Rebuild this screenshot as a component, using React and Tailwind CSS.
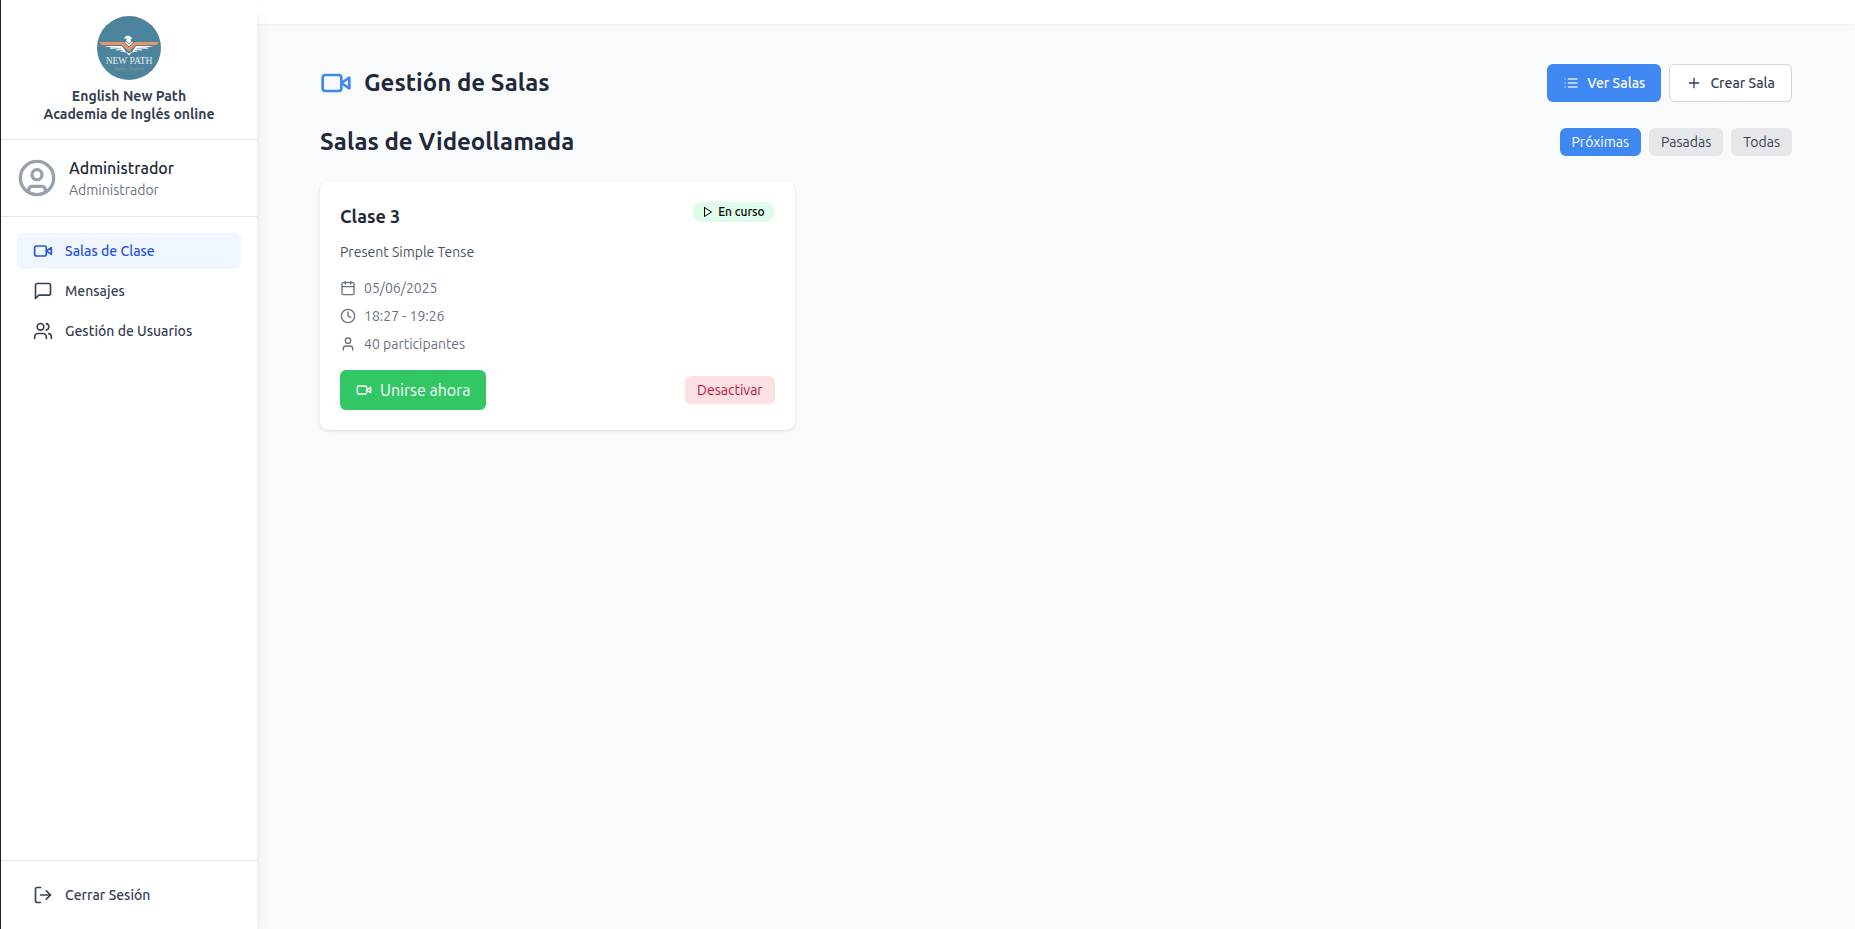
import React, { useState } from 'react'
import { FiCalendar, FiClock, FiList, FiLogOut, FiMessageSquare, FiPlay, FiPlus } from 'react-icons/fi'
import { CircleUser, User, Users } from 'lucide-react'

// camera with the triangle lens
function VideoIcon({ className }) {
    return (
        <svg viewBox="0 0 24 24" fill="none" stroke="currentColor" strokeWidth="2" strokeLinecap="round" strokeLinejoin="round" className={className}>
            <path d="m22 8-6 4 6 4V8Z" />
            <rect width="14" height="12" x="2" y="6" rx="2" ry="2" />
        </svg>
    )
}

const menuItems = [
    { name: 'Salas de Clase', icon: VideoIcon },
    { name: 'Mensajes', icon: FiMessageSquare },
    { name: 'Gestión de Usuarios', icon: Users },
];

const filtros = ['Próximas', 'Pasadas', 'Todas'];

const salas = [
    {
        id: 3,
        nombre: 'Clase 3',
        descripcion: 'Present Simple Tense',
        fecha: '05/06/2025',
        horario: '18:27 - 19:26',
        participantes: 40
    }
];

function Logo() {
    return (
        <svg viewBox="0 0 64 64" className="w-16 h-16" role="img" aria-label="New Path">
            <circle cx="32" cy="32" r="32" fill="#4d849d" />
            {/* wings */}
            <path d="M7 30h18l4.500 6.500-6-1 1-1-6 0 1-1.500-7 0 1.500-1.500z" fill="#f4f7f8" />
            <path d="M57 30H39l-4.500 6.500 6-1-1-1 6 0-1-1.500 7 0-1.500-1.500z" fill="#f4f7f8" />
            <path d="M13 31.800l11 1M17 33.800l9 .8" stroke="#4d849d" strokeWidth="0.500" />
            <path d="M51 31.800l-11 1M47 33.800l-9 .8" stroke="#4d849d" strokeWidth="0.500" />
            <path d="M2 26h24.500l5.500 5.500L37.500 26H62l-2.500 3H39l-7 6.500L25 29H4.500z" fill="#ee935c" />
            {/* head and chest */}
            <path d="M27 22.500c1-2 3-3 5-2.500 2 .3 3 1.700 3 3.500l-1.500-1 .5 3-2 2-3-3 1-2z" fill="#fff" />
            <path d="M28.500 26l3.500 3.500 3.500-3.500" fill="none" stroke="#fff" strokeWidth="1.200" />
            <path d="M28.500 35.500l3.500 4 3.500-4-3.500 2z" fill="#fff" />
            <text x="32" y="48" textAnchor="middle" fill="#e6eef1" fontSize="9.500" fontFamily="Liberation Serif, serif">NEW PATH</text>
            <text x="32" y="54" textAnchor="middle" fill="#a39283" fontSize="5" fontFamily="Liberation Serif, serif">Online English</text>
        </svg>
    )
}

function Sidebar() {
    const [active, setActive] = useState('Salas de Clase');

    return (
        <aside className="relative z-10 flex flex-col w-64 shrink-0 bg-white shadow-lg">
            <div className="flex flex-col items-center p-4 border-b border-gray-200">
                <Logo />
                <p className="mt-2 text-sm leading-tight font-semibold text-center text-gray-700">
                    English New Path<br />Academia de Inglés online
                </p>
            </div>

            <div className="flex items-center p-4 border-b border-gray-200">
                <CircleUser className="w-10 h-10 text-gray-400" />
                <div className="ml-3">
                    <p className="font-medium leading-6 text-gray-800">Administrador</p>
                    <p className="text-sm text-gray-500">Administrador</p>
                </div>
            </div>

            <nav className="flex flex-col flex-1 gap-1 p-4">
                {menuItems.map((item) => (
                    <a
                        key={item.name}
                        href="#"
                        onClick={() => setActive(item.name)}
                        className={`flex items-center px-4 py-2 rounded-md text-sm font-medium ${active === item.name ? 'bg-[#eff6ff] text-[#2c55d6]' : 'text-gray-700'}`}
                    >
                        <item.icon className="w-5 h-5 mr-3" />
                        {item.name}
                    </a>
                ))}
            </nav>

            <div className="p-4 border-t border-gray-200">
                <button className="flex items-center w-full px-4 py-2 text-sm font-medium text-gray-700 rounded-md">
                    <FiLogOut className="w-5 h-5 mr-3" />
                    Cerrar Sesión
                </button>
            </div>
        </aside>
    )
}

function SalaCard({ sala }) {
    return (
        <article className="p-5 bg-white rounded-lg shadow">
            <div className="flex items-start justify-between mb-3">
                <h3 className="text-lg font-semibold text-gray-800">{sala.nombre}</h3>
                <span className="flex items-center gap-1 px-2.5 py-0.5 text-xs font-medium text-black rounded-full bg-[#defce9]">
                    <FiPlay className="w-3 h-3" />
                    En curso
                </span>
            </div>
            <p className="mb-4 text-sm text-gray-600">{sala.descripcion}</p>

            <div className="flex flex-col gap-2 mb-4 text-sm text-gray-500">
                <div className="flex items-center gap-2">
                    <FiCalendar className="w-4 h-4" />
                    {sala.fecha}
                </div>
                <div className="flex items-center gap-2">
                    <FiClock className="w-4 h-4" />
                    {sala.horario}
                </div>
                <div className="flex items-center gap-2">
                    <User className="w-4 h-4" />
                    {sala.participantes} participantes
                </div>
            </div>

            <div className="flex items-center justify-between">
                <button className="flex items-center gap-2 px-4 py-2 text-white rounded-md bg-[#33c664]">
                    <VideoIcon className="w-4 h-4" />
                    Unirse ahora
                </button>
                <button className="px-3 py-1 text-sm rounded-md bg-[#fde0e1] text-[#be123c]">Desactivar</button>
            </div>
        </article>
    )
}

export default function App() {
    const [filtro, setFiltro] = useState('Próximas');

    return (
        <div className="flex min-h-screen border-l border-[#1f2430] bg-[#f9fafc] font-['Ubuntu','Roboto',sans-serif]">
            <Sidebar />

            <div className="flex flex-col flex-1">
                <header className="h-6 bg-white shadow-xs"></header>

                <main className="px-[63px] py-10">
                    <div className="flex items-center justify-between mb-6">
                        <h1 className="flex items-center gap-3 text-2xl font-bold text-gray-800">
                            <VideoIcon className="w-8 h-8 text-[#3f87f1]" />
                            Gestión de Salas
                        </h1>
                        <div className="flex gap-2">
                            <button className="flex items-center gap-2 px-4 py-2 text-sm font-medium text-white rounded-md bg-[#3f87f1]">
                                <FiList className="w-4 h-4 text-blue-100" />
                                Ver Salas
                            </button>
                            <button className="flex items-center gap-2 px-4 py-2 text-sm font-medium text-gray-700 bg-white border border-gray-300 rounded-md">
                                <FiPlus className="w-4 h-4" />
                                Crear Sala
                            </button>
                        </div>
                    </div>

                    <div className="flex items-center justify-between mb-6">
                        <h2 className="text-2xl font-semibold text-gray-800">Salas de Videollamada</h2>
                        <div className="flex gap-2">
                            {filtros.map((f) => (
                                <button
                                    key={f}
                                    onClick={() => setFiltro(f)}
                                    className={`px-3 py-1 text-sm rounded-md ${filtro === f ? 'bg-[#3f87f1] text-white' : 'bg-gray-200 text-gray-700'}`}
                                >
                                    {f}
                                </button>
                            ))}
                        </div>
                    </div>

                    <div className="grid grid-cols-1 gap-6 md:grid-cols-2 lg:grid-cols-3">
                        {salas.map((sala) => (
                            <SalaCard key={sala.id} sala={sala} />
                        ))}
                    </div>
                </main>
            </div>
        </div>
    )
}
